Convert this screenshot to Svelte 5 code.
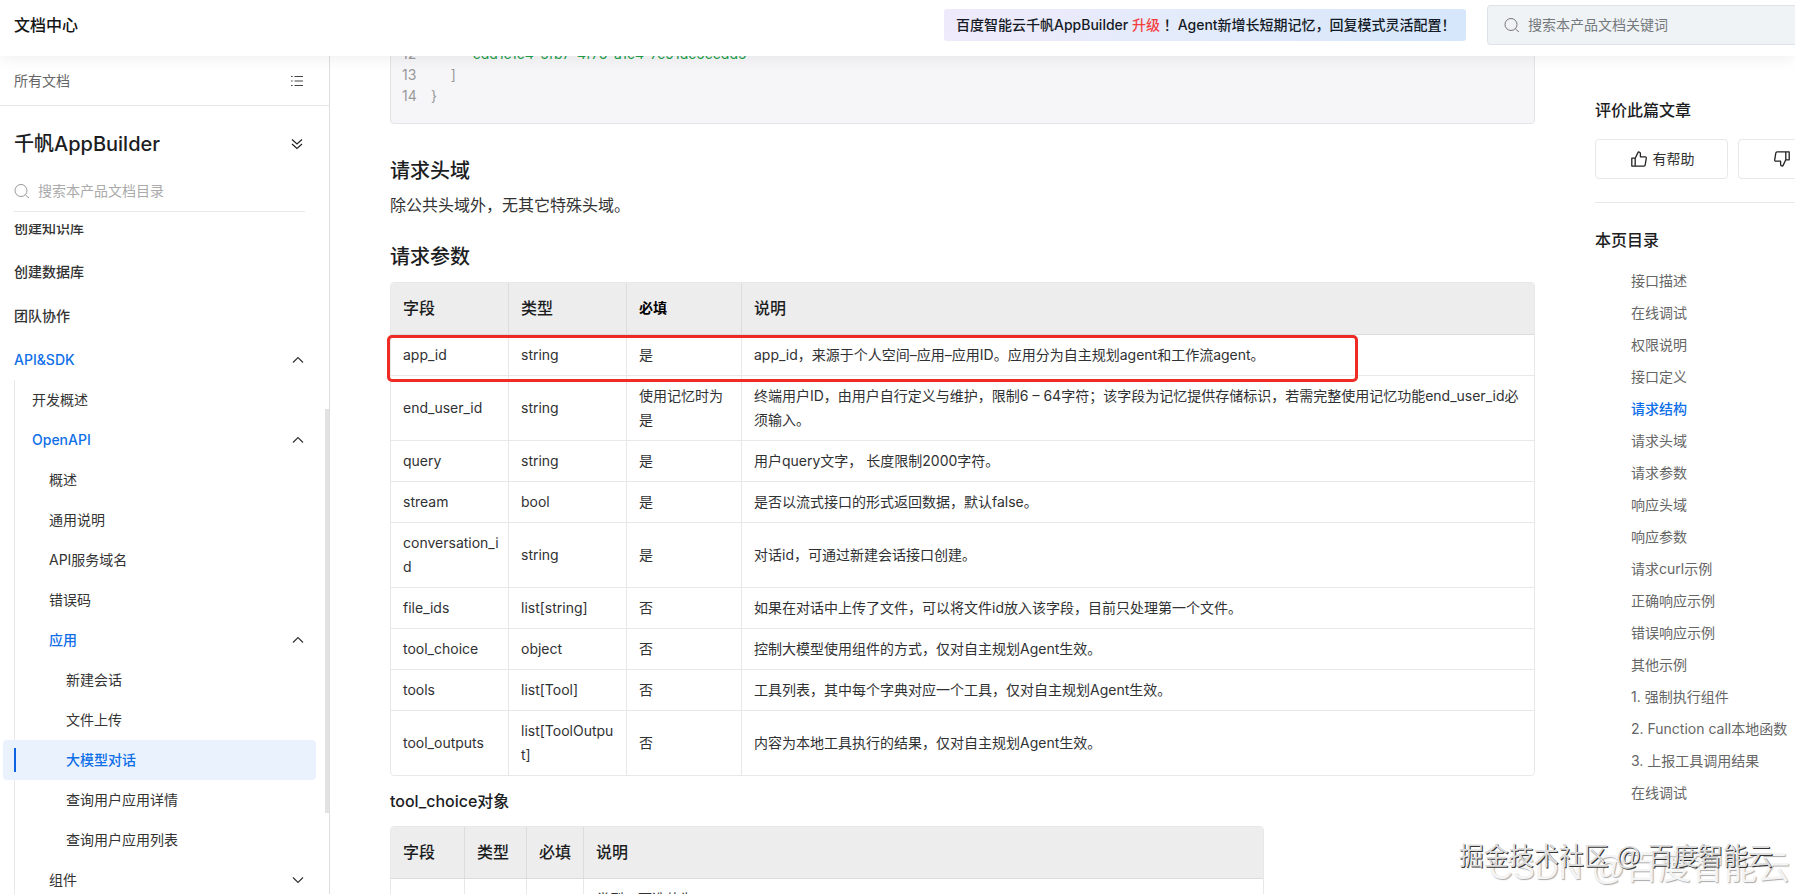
<script>
  const menu = [
    { label: '创建知识库', level: 0 },
    { label: '创建数据库', level: 0 },
    { label: '团队协作', level: 0 },
    { label: 'API&SDK', level: 0, open: true },
    { label: '开发概述', level: 1 },
    { label: 'OpenAPI', level: 1, open: true },
    { label: '概述', level: 2 },
    { label: '通用说明', level: 2 },
    { label: 'API服务域名', level: 2 },
    { label: '错误码', level: 2 },
    { label: '应用', level: 2, open: true },
    { label: '新建会话', level: 3 },
    { label: '文件上传', level: 3 },
    { label: '大模型对话', level: 3, active: true },
    { label: '查询用户应用详情', level: 3 },
    { label: '查询用户应用列表', level: 3 },
    { label: '组件', level: 2, open: false }
  ];

  const params = [
    ['app_id', 'string', '是', 'app_id，来源于个人空间–应用–应用ID。应用分为自主规划agent和工作流agent。'],
    ['end_user_id', 'string', '使用记忆时为是', '终端用户ID，由用户自行定义与维护，限制6 – 64字符；该字段为记忆提供存储标识，若需完整使用记忆功能end_user_id必须输入。'],
    ['query', 'string', '是', '用户query文字， 长度限制2000字符。'],
    ['stream', 'bool', '是', '是否以流式接口的形式返回数据，默认false。'],
    ['conversation_id', 'string', '是', '对话id，可通过新建会话接口创建。'],
    ['file_ids', 'list[string]', '否', '如果在对话中上传了文件，可以将文件id放入该字段，目前只处理第一个文件。'],
    ['tool_choice', 'object', '否', '控制大模型使用组件的方式，仅对自主规划Agent生效。'],
    ['tools', 'list[Tool]', '否', '工具列表，其中每个字典对应一个工具，仅对自主规划Agent生效。'],
    ['tool_outputs', 'list[ToolOutput]', '否', '内容为本地工具执行的结果，仅对自主规划Agent生效。']
  ];

  const toc = [
    '接口描述', '在线调试', '权限说明', '接口定义', '请求结构', '请求头域',
    '请求参数', '响应头域', '响应参数', '请求curl示例', '正确响应示例', '错误响应示例',
    '其他示例', '1. 强制执行组件', '2. Function call本地函数', '3. 上报工具调用结果', '在线调试'
  ];
  const current = '请求结构';

  const code = [
    { no: 12, text: '         "cdd1c1c4-5fb7-4f76-a1c4-7c91dc5ccdd5"', str: true },
    { no: 13, text: '     ]' },
    { no: 14, text: '}' }
  ];
</script>

{#snippet searchIcon()}
  <svg class="search-icon" viewBox="0 0 16 16" fill="none" stroke="currentColor" aria-hidden="true">
    <circle cx="7" cy="7.5" r="6" />
    <path d="M11.5 12l3.5 3" />
  </svg>
{/snippet}

{#snippet thumb(flip)}
  <svg class:flip width="16" height="16" viewBox="0 0 16 16" fill="none" stroke="#222" stroke-width="1.3" stroke-linejoin="round" aria-hidden="true">
    <path d="M.8 7.2h3.4v7.9H.8zM4.2 7.2L6.9 1.6c.4-1 2.500-.8 2.500 1v3.200h4.700c.8 0 1.300.6 1.200 1.400l-1.100 6.700c-.1.700-.6 1.200-1.300 1.200H4.200" />
  </svg>
{/snippet}

<div class="page">
  <header class="topbar">
    <a class="brand" href="#home">文档中心</a>
    <a class="notice" href="#news">百度智能云千帆AppBuilder <em>升级</em> ！Agent新增长短期记忆，回复模式灵活配置！</a>
    <label class="top-search">
      {@render searchIcon()}
      <input type="text" placeholder="搜索本产品文档关键词" aria-label="搜索本产品文档关键词" />
    </label>
  </header>

  <div class="body">
    <nav class="sidebar">
      <div class="all-docs">
        <a href="#all">所有文档</a>
        <svg width="12" height="12" viewBox="0 0 12 12" stroke="#444" stroke-width="1.2" aria-hidden="true">
          <path d="M0 1.5h1.6M0 6h1.6M0 10.5h1.6M3.5 1.5H12M3.5 6H12M3.5 10.5H12" />
        </svg>
      </div>
      <div class="product">
        <h2>千帆AppBuilder</h2>
        <button aria-label="切换产品">
          <svg width="12" height="12" viewBox="0 0 12 12" fill="none" stroke="#222" stroke-width="1.2">
            <path d="M1 1.5l5 4.5 5-4.5M1 6l5 4.5L11 6" />
          </svg>
        </button>
      </div>
      <label class="side-search">
        {@render searchIcon()}
        <input type="text" placeholder="搜索本产品文档目录" aria-label="搜索本产品文档目录" />
      </label>

      <div class="tree">
        <ul>
          {#each menu as item}
            <li
              class="level-{item.level}"
              class:parent={item.open}
              class:active={item.active}
            >
              <a href="#{item.label}">{item.label}</a>
              {#if item.open !== undefined}
                <svg class:down={!item.open} width="12" height="8" viewBox="0 0 12 8" fill="none" stroke="#333" stroke-width="1.2" aria-hidden="true">
                  <path d="M1 6.5l5-5 5 5" />
                </svg>
              {/if}
            </li>
          {/each}
        </ul>
        <span class="scroll-thumb"></span>
      </div>
    </nav>

    <main class="article">
      <div class="code">
        {#each code as line}
          <div class="line"><span>{line.no}</span><code class:str={line.str}>{line.text}</code></div>
        {/each}
      </div>

      <h3>请求头域</h3>
      <p>除公共头域外，无其它特殊头域。</p>

      <h3>请求参数</h3>
      <div class="params-wrap">
        <table class="params">
          <colgroup><col class="c-name" /><col class="c-name" /><col class="c-need" /><col /></colgroup>
          <thead>
            <tr><th>字段</th><th>类型</th><th class="strong">必填</th><th>说明</th></tr>
          </thead>
          <tbody>
            {#each params as row}
              <tr>
                {#each row as cell}<td>{cell}</td>{/each}
              </tr>
            {/each}
          </tbody>
        </table>
        <span class="mark"></span>
      </div>

      <h4>tool_choice对象</h4>
      <table class="choice">
        <colgroup><col class="k1" /><col class="k2" /><col class="k3" /><col /></colgroup>
        <thead>
          <tr><th>字段</th><th>类型</th><th>必填</th><th>说明</th></tr>
        </thead>
        <tbody>
          <tr><td></td><td></td><td></td><td>类型，可选值为</td></tr>
        </tbody>
      </table>
    </main>

    <aside class="rail">
      <h5>评价此篇文章</h5>
      <div class="votes">
        <button>{@render thumb(false)}有帮助</button>
        <button>{@render thumb(true)}没帮助</button>
      </div>
      <h5>本页目录</h5>
      <ul>
        {#each toc as item}
          <li><a href="#{item}" class:current={item === current}>{item}</a></li>
        {/each}
      </ul>
    </aside>
  </div>

  <span class="stamp back">CSDN @百度智能云</span>
  <span class="stamp front">掘金技术社区 @ 百度智能云</span>
</div>

<style>
  :global(body) {
    overflow: hidden;
  }

  .page {
    position: relative;
    display: flex;
    flex-direction: column;
    height: 100vh;
    overflow: hidden;
    background: #fff;
    color: #303133;
    font: 14px/24px Inter, "Liberation Sans", "Noto Sans CJK SC", sans-serif;
  }

  .page * {
    box-sizing: border-box;
  }

  a {
    color: inherit;
    text-decoration: none;
  }

  h2, h3, h4, h5, p, ul {
    margin: 0;
    padding: 0;
    color: #1c1d1f;
    font-weight: 500;
  }

  ul {
    list-style: none;
  }

  input {
    flex: 1;
    min-width: 0;
    padding: 0;
    border: 0;
    outline: 0;
    background: none;
    font: inherit;
  }

  button {
    padding: 0;
    border: 0;
    background: none;
    font: inherit;
    color: inherit;
  }

  .search-icon {
    flex: none;
    width: 16px;
    height: 16px;
  }

  /* top bar */
  .topbar {
    position: relative;
    z-index: 2;
    flex: none;
    display: flex;
    align-items: center;
    height: 56px;
    padding: 0 0 6px 14px;
    background: #fff;
    box-shadow: 0 2px 16px rgba(0, 0, 0, 0.07);
  }

  .brand {
    margin-right: auto;
    color: #151515;
    font-size: 16px;
    font-weight: 500;
  }

  .notice {
    display: flex;
    align-items: center;
    height: 32px;
    width: 522px;
    padding-left: 12px;
    margin-right: 21px;
    border-radius: 3px;
    background: linear-gradient(100deg, #efeafb, #e2ebfb 50%, #d6e6fb);
    color: #151b26;
    font-weight: 500;
    white-space: pre;
  }

  .notice em {
    color: #f33e3e;
    font-style: normal;
  }

  .top-search {
    display: flex;
    align-items: center;
    gap: 8px;
    width: 308px;
    height: 40px;
    padding-left: 16px;
    border: 1px solid #dde3e8;
    border-right: 0;
    border-radius: 4px 0 0 4px;
    background: #eff3f6;
    color: #777;
  }

  .top-search input::placeholder {
    color: #75797d;
  }

  .body {
    flex: 1;
    display: flex;
    min-height: 0;
  }

  /* sidebar */
  .sidebar {
    flex: none;
    display: flex;
    flex-direction: column;
    width: 330px;
    border-right: 1px solid #dedede;
  }

  .all-docs {
    display: flex;
    align-items: center;
    justify-content: space-between;
    height: 50px;
    padding: 0 26px 0 14px;
    border-bottom: 1px solid #e8e8e8;
    color: #666;
  }

  .product {
    display: flex;
    align-items: center;
    justify-content: space-between;
    height: 76px;
    padding: 0 26px 0 14px;
  }

  .product h2 {
    font-size: 20px;
    line-height: 28px;
  }

  .product button {
    display: flex;
  }

  .side-search {
    display: flex;
    align-items: center;
    gap: 8px;
    height: 30px;
    margin: 0 24px 12px 14px;
    padding-bottom: 12px;
    border-bottom: 1px solid #e8e8e8;
    color: #999;
  }

  .side-search input::placeholder {
    color: #aaa;
  }

  .tree {
    position: relative;
    flex: 1;
    min-height: 0;
    overflow: hidden;
  }

  .tree ul {
    margin-top: -18px;
  }

  .tree li {
    position: relative;
    display: flex;
    align-items: center;
    justify-content: space-between;
    height: 40px;
    padding-right: 25px;
    color: #333;
    font-weight: 400;
  }

  .tree .level-0 {
    height: 44px;
    padding-left: 14px;
    font-weight: 500;
  }

  .tree .level-0.parent {
    margin-bottom: -2px;
  }

  .tree .level-1 {
    padding-left: 32px;
  }

  .tree .level-2 {
    padding-left: 49px;
  }

  .tree .level-3 {
    padding-left: 66px;
  }

  .level-1::before,
  .level-2::before,
  .level-3::before {
    content: "";
    position: absolute;
    top: 0;
    bottom: 0;
    left: 14px;
    width: 1px;
    background: #e8e8e8;
  }

  .tree .parent a,
  .tree .active a {
    color: #0f6fe8;
    font-weight: 500;
  }

  .tree .active {
    margin: 0 13px 0 3px;
    padding-left: 63px;
    border-radius: 4px;
    background: #eaf2fe;
  }

  .tree .active::before {
    top: 8px;
    bottom: 8px;
    left: 11px;
    width: 2px;
    background: #0f62e0;
  }

  .down {
    transform: rotate(180deg);
  }

  .scroll-thumb {
    position: absolute;
    top: 185px;
    right: 0;
    width: 4px;
    height: 404px;
    background: #e2e2e2;
  }

  /* article */
  .article {
    flex: 1;
    min-width: 0;
    padding: 0 60px;
    overflow: hidden;
  }

  .code {
    margin-top: -14px;
    padding: 0 11px 17px;
    border: 1px solid #e3e4e6;
    border-radius: 4px;
    background: #f6f6f9;
    line-height: 21px;
    color: #999;
  }

  .line {
    display: flex;
    gap: 13px;
  }

  .line span {
    width: 16px;
  }

  .code code {
    font: inherit;
    white-space: pre;
  }

  .code .str {
    color: #22a04a;
  }

  h3 {
    font-size: 20px;
    line-height: 28px;
  }

  .code + h3 {
    margin-top: 33px;
  }

  .article p {
    margin: 7px 0 25px;
    color: #333;
    font-size: 16px;
    font-weight: 400;
    line-height: 26px;
  }

  .params-wrap {
    position: relative;
    margin-top: 11px;
  }

  table {
    table-layout: fixed;
    border: 1px solid #e8e8e8;
    border-radius: 4px;
    border-spacing: 0;
    overflow: hidden;
    word-break: break-all;
  }

  .params {
    width: 100%;
  }

  .choice {
    width: 874px;
    max-width: 100%;
    margin-top: 13px;
  }

  .c-name {
    width: 118px;
  }

  .c-need {
    width: 115px;
  }

  .k1 {
    width: 74px;
  }

  .k2 {
    width: 62px;
  }

  .k3 {
    width: 57px;
  }

  th,
  td {
    height: 41px;
    padding: 8px 8px 8px 12px;
    border-right: 1px solid #e8e8e8;
    border-bottom: 1px solid #e8e8e8;
    text-align: left;
  }

  th {
    height: 52px;
    padding: 7px 8px 9px 12px;
    border-color: #dcdcdc;
    background: #ededed;
    color: #1c1d1f;
    font-size: 16px;
    font-weight: 500;
  }

  .strong {
    color: #000;
    font-size: 14px;
    font-weight: 700;
  }

  th:last-child,
  td:last-child {
    border-right: 0;
  }

  .params tr:last-child td {
    border-bottom: 0;
  }

  .mark {
    position: absolute;
    top: 53px;
    left: -3px;
    width: 971px;
    height: 47px;
    border: 3px solid #ee2b24;
    border-radius: 5px;
  }

  h4 {
    margin-top: 13px;
    font-size: 16px;
    line-height: 24px;
  }

  /* right rail */
  .rail {
    flex: none;
    width: 200px;
    padding-top: 42px;
  }

  h5 {
    font-size: 16px;
    line-height: 24px;
  }

  .votes {
    display: flex;
    gap: 10px;
    margin: 17px 0 25px;
    padding-bottom: 23px;
    border-bottom: 1px solid #e8e8e8;
  }

  .votes button {
    flex: none;
    display: flex;
    align-items: center;
    justify-content: center;
    gap: 6px;
    width: 133px;
    height: 40px;
    padding-left: 2px;
    border: 1px solid #e8e8e8;
    border-radius: 4px;
  }

  .flip {
    transform: rotate(180deg);
  }

  .rail ul {
    margin-top: 13px;
    padding-left: 36px;
  }

  .rail li {
    color: #666;
    font-weight: 400;
    line-height: 32px;
    white-space: nowrap;
  }

  .rail .current {
    color: #0f6fe8;
    font-weight: 500;
  }

  /* watermarks */
  .stamp {
    position: absolute;
    z-index: 3;
    white-space: nowrap;
    pointer-events: none;
  }

  .back {
    right: 5px;
    bottom: 6px;
    color: #f4f4f4;
    font: 33px/40px "Liberation Sans", "Noto Sans CJK SC", sans-serif;
    text-shadow: 1px 1px 1px #aaa;
  }

  .front {
    right: 22px;
    bottom: 20px;
    color: #ddd;
    font: 25px/36px "Liberation Sans", "Noto Sans CJK SC", sans-serif;
    text-shadow: 1px 1px 0 #333;
  }
</style>
